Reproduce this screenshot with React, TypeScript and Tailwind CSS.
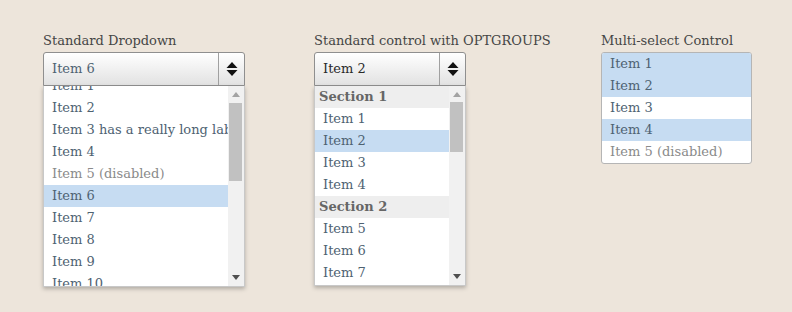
import React from 'react'

const font = { fontFamily: '"DejaVu Serif", Georgia, serif' }

type Row = { label: string; kind?: 'item' | 'disabled' | 'selected' | 'group' }

function UpDown() {
  return (
    <svg width="12" height="16" viewBox="0 0 12 16">
      <path d="M6 1 L11.5 7 L0.5 7 Z" fill="#111" />
      <path d="M6 15 L11.5 9 L0.5 9 Z" fill="#111" />
    </svg>
  )
}

function Scrollbar({ thumbTop, thumbHeight }: { thumbTop: number; thumbHeight: number }) {
  return (
    <div className="relative w-[16px] shrink-0 bg-[#f1f1f1]">
      <svg className="absolute left-[4px] top-[6px]" width="8" height="5" viewBox="0 0 8 5">
        <path d="M4 0 L8 5 L0 5 Z" fill="#a3a3a3" />
      </svg>
      <div className="absolute left-[1px] w-[13px] bg-[#c1c1c1]" style={{ top: thumbTop, height: thumbHeight }} />
      <svg className="absolute left-[4px] bottom-[6px]" width="8" height="5" viewBox="0 0 8 5">
        <path d="M0 0 L8 0 L4 5 Z" fill="#505050" />
      </svg>
    </div>
  )
}

function RowItem({ row }: { row: Row }) {
  if (row.kind === 'group')
    return <div className="h-[22px] leading-[22px] px-[4px] bg-[#eeeeee] text-[#666] font-bold whitespace-nowrap">{row.label}</div>
  const cls =
    row.kind === 'selected'
      ? 'bg-[#c6dcf2] text-[#4e6272]'
      : row.kind === 'disabled'
      ? 'text-[#8a8a8a]'
      : 'text-[#4e6272]'
  return <div className={`h-[22px] leading-[22px] px-[8px] whitespace-nowrap overflow-hidden ${cls}`}>{row.label}</div>
}

function SelectBox({ value, dark }: { value: string; dark?: boolean }) {
  return (
    <div className="flex h-[34px] border border-[#8f8f8f] rounded-t-[3px] bg-gradient-to-b from-white to-[#e2e2e2]">
      <div className={`flex-1 flex items-center px-[8px] ${dark ? 'text-[#2a2a2a]' : 'text-[#4e6272]'}`}>{value}</div>
      <div className="w-[26px] border-l border-[#a0a0a0] flex items-center justify-center">
        <UpDown />
      </div>
    </div>
  )
}

function Dropdown({ label, value, rows, width, offset, thumbTop, thumbHeight, height, dark }: {
  label: string; value: string; rows: Row[]; width: number; offset: number; thumbTop: number; thumbHeight: number; height: number; dark?: boolean
}) {
  return (
    <div className="flex flex-col" style={{ width }}>
      <div className="text-[#454545] h-[20px] leading-[18px] whitespace-nowrap">{label}</div>
      <SelectBox value={value} dark={dark} />
      <div className="flex bg-white border border-t-0 border-[#c8c8c8] shadow-[0_2px_4px_rgba(0,0,0,0.25)] overflow-hidden" style={{ height }}>
        <div className="flex-1 overflow-hidden">
          <div style={{ marginTop: -offset }}>
            {rows.map((r, i) => <RowItem key={i} row={r} />)}
          </div>
        </div>
        <Scrollbar thumbTop={thumbTop} thumbHeight={thumbHeight} />
      </div>
    </div>
  )
}

export default function App() {
  const list1: Row[] = [
    { label: 'Item 1' }, { label: 'Item 2' }, { label: 'Item 3 has a really long label' }, { label: 'Item 4' },
    { label: 'Item 5 (disabled)', kind: 'disabled' }, { label: 'Item 6', kind: 'selected' }, { label: 'Item 7' },
    { label: 'Item 8' }, { label: 'Item 9' }, { label: 'Item 10' }, { label: 'Item 11' },
  ]
  const list2: Row[] = [
    { label: 'Section 1', kind: 'group' }, { label: 'Item 1' }, { label: 'Item 2', kind: 'selected' }, { label: 'Item 3' },
    { label: 'Item 4' }, { label: 'Section 2', kind: 'group' }, { label: 'Item 5' }, { label: 'Item 6' }, { label: 'Item 7' }, { label: 'Item 8' },
  ]
  const multi: Row[] = [
    { label: 'Item 1', kind: 'selected' }, { label: 'Item 2', kind: 'selected' }, { label: 'Item 3' },
    { label: 'Item 4', kind: 'selected' }, { label: 'Item 5 (disabled)', kind: 'disabled' },
  ]
  return (
    <div className="w-[792px] h-[312px] bg-[#ede5db] text-[13px] pt-[32px] pl-[43px] flex items-start" style={font}>
      <Dropdown label="Standard Dropdown" value="Item 6" rows={list1} width={202} offset={11} thumbTop={17} thumbHeight={78} height={201} />
      <div className="ml-[69px]">
        <Dropdown label="Standard control with OPTGROUPS" value="Item 2" rows={list2} width={152} offset={0} thumbTop={16} thumbHeight={50} height={200} dark />
      </div>
      <div className="ml-[135px] w-[151px] flex flex-col">
        <div className="text-[#454545] h-[20px] leading-[18px] whitespace-nowrap">Multi-select Control</div>
        <div className="bg-white border border-[#b5b5b5] rounded-[3px] overflow-hidden">
          {multi.map((r, i) => <RowItem key={i} row={r} />)}
        </div>
      </div>
    </div>
  )
}
